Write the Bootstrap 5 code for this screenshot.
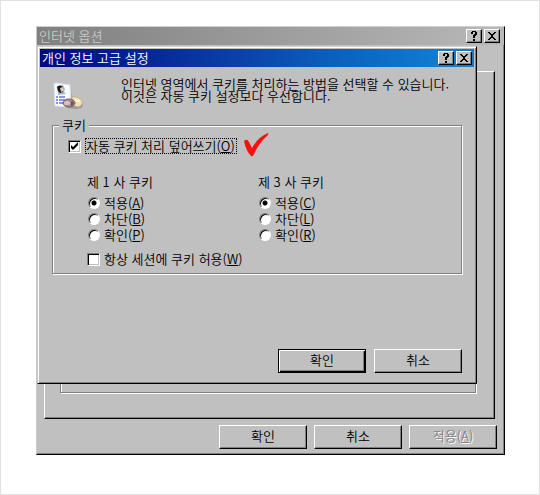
<!DOCTYPE html>
<html lang="ko">
<head>
<meta charset="utf-8">
<meta name="viewport" content="width=device-width, initial-scale=1">
<title>인터넷 옵션</title>
<link href="https://cdn.jsdelivr.net/npm/bootstrap@5.3.0/dist/css/bootstrap.min.css" rel="stylesheet">
<style>
  :root { --face: #c0c0c0; --shade: #808080; }
  body {
    font: 350 13px/16px "Noto Sans CJK KR", sans-serif;
    color: #000; background: #fff; min-height: 100vh;
    padding: 25px 34px 39px 35px; border: 1px solid #e1e1e1;
  }
  .win {
    background: var(--face); border: 1px solid;
    border-color: #d0d0d0 #000 #000 #c8c8c8;
    box-shadow: inset -1px -1px var(--shade);
  }
  .win-dialog {
    top: 19px; left: 0; right: 27px; padding: 2px;
    box-shadow: inset 1px 1px #fff, inset -1px -1px var(--shade);
  }
  .caption { height: 18px; gap: 2px; padding: 0 2px; }
  .caption-off { background: linear-gradient(90deg, #808080, #b8b8b8); color: #c8c8c8; padding-right: 4px; }
  .caption-on { background: linear-gradient(90deg, #000880, #0838a0 38%, #0c60bc 68%, #107cd0 92%); color: #fff; }
  .cap-text { font-size: 13px; line-height: 16px; font-weight: 350; }
  .cap-btn, .push {
    background: var(--face); border: 1px solid; border-color: #fff #000 #000 #fff;
    box-shadow: inset -1px -1px var(--shade); border-radius: 0; color: #000; padding: 0;
  }
  .cap-btn { width: 16px; height: 14px; }
  .cap-btn svg { display: block; margin: auto; }
  .push { width: 88px; height: 24px; font-size: 13px; line-height: 16px; font-weight: 350; padding-bottom: 2px; }
  .push-default { border: 1px solid #000; box-shadow: inset 1px 1px #fff, inset -1px -1px #000, inset -2px -2px var(--shade); }
  .push:disabled { color: var(--shade); text-shadow: 1px 1px #fff; }
  .tab-sheet {
    margin: 26px 9px 6px 7px; padding: 15px 18px 25px 15px; min-height: 348px;
    border: 1px solid; border-color: #fff #000 #000 #fff; box-shadow: inset -1px -1px var(--shade);
  }
  .sheet-group { border: 1px solid var(--shade); box-shadow: 1px 1px #fff, inset 1px 0 #fff; }
  .win-footer { gap: 7px; padding: 0 7px 5px; }
  .dlg-body { padding: 11px 12px 8px 12px; }
  .intro { gap: 37px; line-height: 12px; margin-bottom: 13px; }
  .intro-icon { margin-bottom: -8px; }
  .group {
    border: 1px solid var(--shade); box-shadow: 1px 1px #fff, inset 1px 1px #fff;
    padding: 5px 15px 6px;
  }
  .group legend {
    float: none; width: auto; margin: 0 0 0 -9px; padding: 0 3px;
    font-size: 13px; line-height: 16px; background: var(--face);
  }
  .focused { outline: 1px dotted #000; outline-offset: -1px; padding: 0 2px 0 1px; }
  .red-check { margin: -8px 0 -5px 2px; }
  .opt { gap: 4px; }
  .opt input { appearance: none; margin: 0; background: #fff; flex: none; }
  .opt input[type=checkbox] {
    width: 13px; height: 13px; border: 1px solid; border-color: var(--shade) #fff #fff var(--shade);
    box-shadow: inset 1px 1px #000, inset -1px -1px var(--face);
  }
  .opt input[type=checkbox]:checked {
    background: #fff url("data:image/svg+xml,%3Csvg xmlns='http://www.w3.org/2000/svg' viewBox='0 0 11 11'%3E%3Cpath d='M2 4v3l2 2 5-5V1L4 6z'/%3E%3C/svg%3E") center/11px 11px no-repeat;
  }
  .opt input[type=radio] {
    width: 12px; height: 12px; border-radius: 50%; border: 1px solid;
    border-color: var(--shade) #fff #fff var(--shade); box-shadow: inset 1px 1px #000;
  }
  .opt input[type=radio]:checked { background: radial-gradient(circle at 50% 50%, #000 2px, #fff 3px); }
  .parties { padding-top: 20px; }
  .party { width: 171px; }
  .party-list { padding: 5px 0 0 1px; }
  .indent { padding-left: 19px; }
  .dlg-footer { gap: 8px; margin-top: 75px; }
</style>
<script src="https://cdn.jsdelivr.net/npm/bootstrap@5.3.0/dist/js/bootstrap.bundle.min.js"></script>
</head>
<body>
<main class="win position-relative">
  <header class="caption caption-off d-flex align-items-center">
    <h1 class="cap-text m-0 me-auto">인터넷 옵션</h1>
    <button type="button" class="cap-btn" aria-label="도움말"><svg width="10" height="10" viewBox="0 0 10 10" shape-rendering="crispEdges"><path d="M3 0h4v1h1v3h-1v1h-1v2h-2v-3h1v-1h1v-2h-2v2h-2v-2h1zM4 8h2v2h-2z"/></svg></button>
    <button type="button" class="cap-btn" aria-label="닫기"><svg width="8" height="8" viewBox="0 0 8 8" shape-rendering="crispEdges"><path d="M0 0h2v1h1v1h2v-1h1v-1h2v1h-1v1h-1v1h-1v2h1v1h1v1h1v1h-2v-1h-1v-1h-2v1h-1v1h-2v-1h1v-1h1v-1h1v-2h-1v-1h-1v-1h-1z"/></svg></button>
  </header>
  <div class="tab-sheet d-flex"><div class="sheet-group flex-grow-1"></div></div>
  <footer class="win-footer d-flex justify-content-end">
    <button type="button" class="push">확인</button>
    <button type="button" class="push">취소</button>
    <button type="button" class="push" disabled>적용(<u>A</u>)</button>
  </footer>

  <section class="win win-dialog position-absolute" role="dialog" aria-labelledby="dlgTitle">
    <header class="caption caption-on d-flex align-items-center">
      <h2 class="cap-text m-0 me-auto" id="dlgTitle">개인 정보 고급 설정</h2>
      <button type="button" class="cap-btn" aria-label="도움말"><svg width="10" height="10" viewBox="0 0 10 10" shape-rendering="crispEdges"><path d="M3 0h4v1h1v3h-1v1h-1v2h-2v-3h1v-1h1v-2h-2v2h-2v-2h1zM4 8h2v2h-2z"/></svg></button>
      <button type="button" class="cap-btn" aria-label="닫기"><svg width="8" height="8" viewBox="0 0 8 8" shape-rendering="crispEdges"><path d="M0 0h2v1h1v1h2v-1h1v-1h2v1h-1v1h-1v1h-1v2h1v1h1v1h1v1h-2v-1h-1v-1h-2v1h-1v1h-2v-1h1v-1h1v-1h1v-2h-1v-1h-1v-1h-1z"/></svg></button>
    </header>
    <form class="dlg-body">
      <div class="intro d-flex">
        <svg class="intro-icon flex-shrink-0" width="32" height="34" viewBox="0 0 32 34" aria-hidden="true">
          <path d="M5 6l14 2 2 21-17-1z" fill="#999" opacity=".5"/>
          <path d="M2 6l2-1 14 2 1 22-16-1z" fill="#f8faff" stroke="#dde2ef"/>
          <path d="M5 8l6-1 2 4-1 3 2 2-8 1z" fill="#a8b6cc"/>
          <path d="M5 9q3-3 6 0l-1 3 1 2-3 1-2-2z" fill="#161820"/>
          <path d="M8 10l3-1v4l-2 1z" fill="#e8c8a8"/>
          <path d="M4 19h2m1 0h6M4 22h2m1 0h6M4 25h2m1 0h5" stroke="#6870e8" stroke-width="1.5"/>
          <path d="M13 25q6-4 12-2l5 2q2 3-1 5l-5 1-8-1q-4-2-3-5" fill="#777" opacity=".5"/>
          <path d="M20 19q7-1 10 4 1 5-4 6l-7-2z" fill="#f0dfb8" stroke="#b8a080" stroke-width=".7"/>
          <path d="M22 22q3 2 6 1" stroke="#fff6dc" fill="none" stroke-width="2"/>
          <ellipse cx="17" cy="25" rx="6" ry="4" fill="#aa8a8c" stroke="#705a64"/>
          <ellipse cx="15" cy="25" rx="3" ry="2" fill="#d8c4c0"/>
          <path d="M19 23l3 1-1 3-2 1z" fill="#74505a"/>
        </svg>
        <p class="m-0">인터넷 영역에서 쿠키를 처리하는 방법을 선택할 수 있습니다.<br>이것은 자동 쿠키 설정보다 우선합니다.</p>
      </div>
      <fieldset class="group">
        <legend>쿠키</legend>
        <div class="opt d-flex align-items-center">
          <input type="checkbox" id="override" checked>
          <label for="override" class="focused">자동 쿠키 처리 덮어쓰기(<u>O</u>)</label>
          <svg class="red-check" width="26" height="26" viewBox="0 0 26 26" aria-hidden="true"><path d="M1 9q3-3 5 1l3 6Q15 5 25 1q1 1-1 3-8 7-13 18-1 3-3 2Q3 19 1 9z" fill="#f91010"/></svg>
        </div>
        <div class="parties indent d-flex">
          <div class="party" role="radiogroup" aria-labelledby="first">
            <div id="first">제 1 사 쿠키</div>
            <div class="party-list">
              <div class="opt d-flex align-items-center"><input type="radio" name="p1" id="p1a" checked><label for="p1a">적용(<u>A</u>)</label></div>
              <div class="opt d-flex align-items-center"><input type="radio" name="p1" id="p1b"><label for="p1b">차단(<u>B</u>)</label></div>
              <div class="opt d-flex align-items-center"><input type="radio" name="p1" id="p1p"><label for="p1p">확인(<u>P</u>)</label></div>
            </div>
          </div>
          <div class="party" role="radiogroup" aria-labelledby="third">
            <div id="third">제 3 사 쿠키</div>
            <div class="party-list">
              <div class="opt d-flex align-items-center"><input type="radio" name="p3" id="p3c" checked><label for="p3c">적용(<u>C</u>)</label></div>
              <div class="opt d-flex align-items-center"><input type="radio" name="p3" id="p3l"><label for="p3l">차단(<u>L</u>)</label></div>
              <div class="opt d-flex align-items-center"><input type="radio" name="p3" id="p3r"><label for="p3r">확인(<u>R</u>)</label></div>
            </div>
          </div>
        </div>
        <div class="opt indent d-flex align-items-center pt-2">
          <input type="checkbox" id="session">
          <label for="session">항상 세션에 쿠키 허용(<u>W</u>)</label>
        </div>
      </fieldset>
      <div class="dlg-footer d-flex justify-content-end">
        <button type="button" class="push push-default">확인</button>
        <button type="button" class="push">취소</button>
      </div>
    </form>
  </section>
</main>
</body>
</html>
